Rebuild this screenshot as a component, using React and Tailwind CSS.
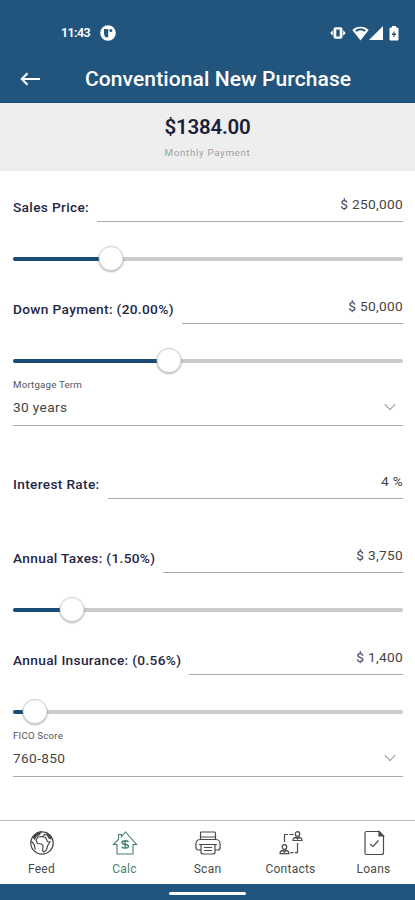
import React, { useState } from 'react';

const StatusBar = () => (
  <div className="h-[57px] pt-[23px] pl-[61px] pr-[17px] flex items-start text-white">
    <div className="flex items-center gap-[10px] h-5">
      <span className="w-[29px] text-[12.500px] font-semibold tracking-[-0.6px]">11:43</span>
      <svg width="16" height="16" viewBox="0 0 16 16">
        <circle cx="8" cy="8" r="7.8" fill="currentColor" />
        <path d="M4 4h4.200v8.200H5.200Q4 10.500 4 8z" fill="#22557d" />
        <circle cx="10.800" cy="5.600" r="1.500" fill="#22557d" />
      </svg>
    </div>
    <div className="ml-auto flex items-center h-5">
      <svg width="16" height="14" viewBox="0 0 16 14" className="mr-[6px]" fill="currentColor">
        <path d="M.2 7l2.600-2.800v5.600zM15.800 7l-2.600-2.800v5.600z" />
        <path fillRule="evenodd" d="M5.500 1.200h5a2 2 0 0 1 2 2v7.600a2 2 0 0 1-2 2h-5a2 2 0 0 1-2-2V3.200a2 2 0 0 1 2-2zm.8 2.300v7h3.400v-7z" />
      </svg>
      <svg width="17" height="15" viewBox="0 0 17 15" fill="currentColor">
        <path fillRule="evenodd" d="M.3 4C5-.2 12-.2 16.700 4L8.500 14.500zM3.200 4.300l1.300 1.500a6.500 6.500 0 0 1 8 0l1.300-1.500a9 9 0 0 0-10.600 0z" />
      </svg>
      <svg width="14" height="14" viewBox="0 0 14 14" fill="currentColor">
        <path d="M14 0v14H0z" />
      </svg>
      <svg width="10" height="15" viewBox="0 0 10 15" className="ml-[6px] mr-[-1px]" fill="currentColor">
        <path fillRule="evenodd" d="M3 0h4v1.500h1.500q1 0 1 1v11q0 1-1 1h-7q-1 0-1-1v-11q0-1 1-1H3zM4.400 5.500v2H3v1.400h1.400v2h1.200v-2H7V7.500H5.600v-2z" />
      </svg>
    </div>
  </div>
);

const Header = ({ title }) => (
  <header className="h-[103px] bg-[#22557d] border-b border-[#1b4a70]">
    <StatusBar />
    <div className="h-11 flex items-center pl-5 text-white">
      <button className="w-[65px]">
        <svg width="21" height="14" viewBox="0 0 21 14" fill="none" stroke="currentColor" strokeWidth="2">
          <path d="M20 7H2M7.500 1.200L1.700 7l5.800 5.800" />
        </svg>
      </button>
      <h1 className="pt-0.5 text-[21px] font-medium tracking-[0.1px] whitespace-nowrap">{title}</h1>
    </div>
  </header>
);

const Field = ({ label, value, className }) => (
  <div className={`h-9 flex gap-2 ${className || ''}`}>
    <label className="pt-[11px] text-[13.700px] leading-5 font-medium tracking-[0.33px] text-[#1f2744] whitespace-nowrap">
      {label}
    </label>
    <div className="flex-1 pt-2 text-right text-[13.700px] leading-5 tracking-[0.3px] text-[#444444] border-b border-[#ababab]">
      {value}
    </div>
  </div>
);

const Slider = ({ value, className }) => (
  <div className={`relative h-[25px] mt-6 flex items-center ${className || ''}`}>
    <div className="w-full h-1 rounded-full bg-[#cbcbcb] overflow-hidden">
      <div className="h-full bg-[#1a4c78]" style={{ width: `${value}%` }} />
    </div>
    <div
      className="absolute top-0 size-[25px] -translate-x-1/2 rounded-full bg-white border border-[#d0d0d0] shadow-[0_1px_2px_rgba(0,0,0,0.3)]"
      style={{ left: `${value}%` }}
    />
  </div>
);

const SelectField = ({ label, value }) => (
  <div className="h-[53px] border-b border-[#ababab]">
    <div className="pt-1 text-[9.700px] leading-4 tracking-[0.2px] text-[#555555]">{label}</div>
    <div className="mt-1 pr-[7px] flex items-center justify-between">
      <span className="text-[13.700px] leading-5 tracking-[0.35px] text-[#444444]">{value}</span>
      <svg width="12" height="8" viewBox="0 0 12 8" fill="none" stroke="#a3a3a3" strokeWidth="1.200">
        <path d="M.8 1.200L6 6.700l5.200-5.500" />
      </svg>
    </div>
  </div>
);

const FeedIcon = () => (
  <svg width="26" height="26" viewBox="0 0 26 26" fill="none" stroke="currentColor" strokeWidth="1.200">
    <circle cx="13" cy="13" r="11.200" />
    <path d="M13 6.500l-4 .5-2 3 1.500 3.500 4 .5 1.500 2-.500 4.500 1.500 1.500 2.500-2 1-4 2.500-4-2.500-.500-2-4zM14 6.500l1.500-2 3 .500 2 4M2.200 11l3 3.500 1 5" />
    <path d="M4 7l4-4 4-1.200-1.500 2.700-3 1.500L5.500 9zM18 3l4.500 4.500-.500 1.500-3-3z" fill="currentColor" />
  </svg>
);

const CalcIcon = () => (
  <svg width="26" height="26" viewBox="0 0 26 26" fill="none" stroke="currentColor" strokeWidth="1.100">
    <path d="M1.500 14.500L6.500 9.500V4.500h3v2L13.500 2l11 12.500H21v9.500H5v-9.500z" />
    <path d="M16.500 11.700c-1-1.300-6.500-1.500-6.500 1 0 2.500 6.500 1 6.500 3.500 0 2.500-5.500 2.300-6.800.8M13.200 9.800v9" strokeWidth="1.400" />
  </svg>
);

const ScanIcon = () => (
  <svg width="26" height="26" viewBox="0 0 26 26" fill="none" stroke="currentColor" strokeWidth="1.200">
    <path d="M5.500 9.500V3a1 1 0 0 1 1-1h13a1 1 0 0 1 1 1v6.500M6 20H3a2 2 0 0 1-2-2v-4.500a4 4 0 0 1 4-4h16a4 4 0 0 1 4 4V18a2 2 0 0 1-2 2h-3" />
    <path d="M4 14.500h18M6 14.500v7.500a2 2 0 0 0 2 2h10a2 2 0 0 0 2-2v-7.500M9 17.500h8M9 20.500h8M5.500 7h15" />
  </svg>
);

const ContactsIcon = () => (
  <svg width="26" height="26" viewBox="0 0 26 26" fill="none" stroke="currentColor" strokeWidth="1.200">
    <circle cx="19.500" cy="4" r="2.300" />
    <path d="M15 10.500c0-4.500 9-4.500 9 0zM18 7.300l1.500 1.700L21 7.300" />
    <circle cx="6.500" cy="17" r="2.300" />
    <path d="M2 23.700c0-4.800 9-4.800 9 0zM5 20.300L6.500 22 8 20.300" />
    <path d="M6.500 12V4.500H10M11.500 4.500h4M19.500 13v9.700H17M15.500 22.700h-3" />
  </svg>
);

const LoansIcon = () => (
  <svg width="26" height="26" viewBox="0 0 26 26" fill="none" stroke="currentColor" strokeWidth="1.200">
    <path d="M5.500 1.500H18l4.500 4.500v16.500a2 2 0 0 1-2 2h-15a1.500 1.500 0 0 1-1.500-1.500V3a1.500 1.500 0 0 1 1.500-1.500z" />
    <path d="M18 1.500V6h4.500z" fill="currentColor" />
    <path d="M9 14l3 2.500 5.500-6" />
  </svg>
);

const tabs = [
  { name: 'Feed', icon: FeedIcon },
  { name: 'Calc', icon: CalcIcon },
  { name: 'Scan', icon: ScanIcon },
  { name: 'Contacts', icon: ContactsIcon },
  { name: 'Loans', icon: LoansIcon },
];

const App = () => {
  const [activeTab, setActiveTab] = useState('Calc');

  return (
    <div className="w-full h-[900px] flex flex-col bg-white font-[Roboto,sans-serif] overflow-hidden">
      <Header title="Conventional New Purchase" />

      <div className="h-[68px] pt-2.5 bg-[#eeeeee] text-center">
        <div className="text-[20.500px] leading-7 font-semibold tracking-[-0.2px] text-[#1b1f3a]">$1384.00</div>
        <div className="mt-1 text-[9.800px] leading-4 tracking-[0.65px] text-[#a0a0a0]">Monthly Payment</div>
      </div>

      <main className="flex-1 px-[13px] pr-3 pt-[15px]">
        <Field label="Sales Price:" value="$ 250,000" />
        <Slider value={25} className="mb-[17px]" />
        <Field label="Down Payment: (20.00%)" value="$ 50,000" />
        <Slider value={40} />
        <SelectField label="Mortgage Term" value="30 years" />
        <Field label="Interest Rate:" value="4 %" className="mt-[37px]" />
        <Field label="Annual Taxes: (1.50%)" value="$ 3,750" className="mt-[38px]" />
        <Slider value={15} className="mb-[17px]" />
        <Field label="Annual Insurance: (0.56%)" value="$ 1,400" />
        <Slider value={5.6} />
        <SelectField label="FICO Score" value="760-850" />
      </main>

      <nav className="h-16 flex border-t border-[#bdbdbd]">
        {tabs.map(({ name, icon: Icon }) => (
          <button
            key={name}
            onClick={() => setActiveTab(name)}
            className={`flex-1 pt-[9px] flex flex-col items-center ${activeTab === name ? 'text-[#41836b]' : 'text-[#4a4a4a]'}`}
          >
            <Icon />
            <span className="mt-[5px] text-[12px] leading-4 tracking-[0.25px]">{name}</span>
          </button>
        ))}
      </nav>

      {/* Home indicator */}
      <div className="h-4 flex justify-center items-center pt-[3px] bg-[#22557d]">
        <div className="w-[77px] h-[3px] rounded-full bg-white" />
      </div>
    </div>
  );
};

export default App;
